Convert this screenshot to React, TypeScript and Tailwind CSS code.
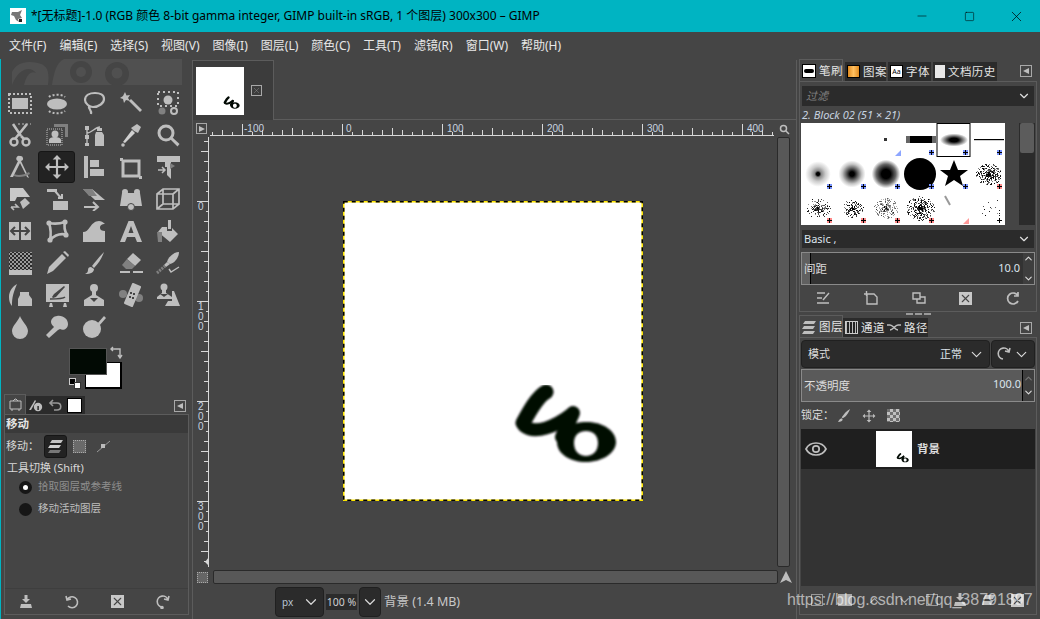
import { ReactNode } from "react";
import { ChevronDown, ChevronUp, Minus, Square, X } from "lucide-react";

const C = "#bebebe";

function Ico({ children, size = 24, box = 24 }: { children: ReactNode; size?: number; box?: number }) {
  return (
    <svg width={size} height={size} viewBox={`0 0 ${box} ${box}`} fill={C} stroke="none">
      {children}
    </svg>
  );
}

function Arrows4() {
  return <path d="M12 1l4 4h-3v6h6V8l4 4-4 4v-3h-6v6h3l-4 4-4-4h3v-6H5v3l-4-4 4-4v3h6V5H8z" />;
}

const tools: ReactNode[] = [
  // row 1
  <Ico><path d="M4 7h16v11H4z" /><path d="M1 3h22v19H1z" fill="none" stroke={C} strokeWidth="2" strokeDasharray="2 2" /></Ico>,
  <Ico><ellipse cx="12" cy="13" rx="10" ry="5.5" /><path d="M4 6c3-3 13-3 16 0M4 20c3 3 13 3 16 0" fill="none" stroke={C} strokeWidth="2" strokeDasharray="2 2" /></Ico>,
  <Ico><path d="M3 9c0-5 5-7 10-7s9 2 9 6-5 8-11 8c-3 0-8-3-8-7zM7 15c-1 3 3 4 2 8" fill="none" stroke={C} strokeWidth="2.2" /></Ico>,
  <Ico><path d="M10 10l2-2 11 11-2 2z" /><path d="M6 1l1.5 3.5L11 4 9 7l2 3-4-1-2 3-1-4-3-1 3-2z" /></Ico>,
  <Ico><circle cx="12" cy="9" r="4.5" /><circle cx="6" cy="20" r="3.5" fill="#808080" /><circle cx="18" cy="20" r="3" fill="none" stroke={C} strokeWidth="2" /><path d="M2 1h20v14H2z" fill="none" stroke={C} strokeWidth="2" strokeDasharray="2 3" /></Ico>,
  // row 2
  <Ico><path d="M5 1l8 12M19 1L7 16" fill="none" stroke={C} strokeWidth="2.6" /><circle cx="6" cy="19" r="3.5" fill="none" stroke={C} strokeWidth="2.4" /><circle cx="18" cy="19" r="3.5" fill="none" stroke={C} strokeWidth="2.4" /><path d="M13 13l3 3" stroke={C} strokeWidth="2.6" /><path d="M10 1h13" stroke={C} strokeDasharray="2 2" /></Ico>,
  <Ico><path d="M2 6h15v16H2z" fill="none" stroke={C} strokeWidth="1" strokeDasharray="1 1" /><circle cx="10" cy="11" r="3.5" /><path d="M4 20v-3c0-2 3-3 6-3s6 1 6 3v3z" /><path d="M9 1h14v13h-3V4H9z" fill="#808080" /></Ico>,
  <Ico><path d="M3 3h4v4H3zM3 12h4v4H3zM3 20h4v3H3z" /><path d="M5 7v13M5 10c5 0 8-6 13-6" fill="none" stroke={C} strokeWidth="1.4" /><path d="M14 9h6l2 3v11h-9V12z" /><path d="M15 5h5v3h-5z" /></Ico>,
  <Ico><path d="M15 8l-3-3 6-4 4 3-3 6z" /><path d="M13 7l3 3-10 10-2-1z" fill="#d0d0d0" /><circle cx="4" cy="22" r="1.8" /></Ico>,
  <Ico><circle cx="10" cy="10" r="7" fill="none" stroke={C} strokeWidth="3" /><path d="M14.5 16.5l2-2 7 6.5-2 2.5z" /></Ico>,
  // row 3
  <Ico><path d="M12 1a2.5 2.5 0 0 1 1 5l8 17-2-1L12 8 5 22H2l8-16a2.5 2.5 0 0 1 2-5z" /><path d="M6 19c4 2 10 1 15-2l1 2c-5 3-12 4-16 2z" fill="#808080" /></Ico>,
  <Ico size={26}><Arrows4 /></Ico>,
  <Ico><path d="M2 1h4v22H2zM8 5h9v7H8zM8 14h14v7H8z" /></Ico>,
  <Ico><path d="M4 6h16v15H4z" fill="none" stroke={C} strokeWidth="3" /><path d="M1 3h3v3H1zM20 21h3v3h-3z" /></Ico>,
  <Ico><path d="M1 1h23v6h-9v17l-4-4v-8l-2 0V7H1z" /><path d="M2 15h7M6 12l3 3-3 3" fill="none" stroke={C} strokeWidth="1.5" /><path d="M14 8l5 3-5 3z" fill="#808080" /></Ico>,
  // row 4
  <Ico><path d="M2 1h13l7 9H9l-2 4H2z" fill="#c8c8c8" /><path d="M12 15l5-4 5 5-7 6z" /><path d="M3 20h7l-3-3M3 20l3 3" fill="none" stroke={C} strokeWidth="1.6" /></Ico>,
  <Ico><path d="M2 2l10 0 0 3H2z" /><path d="M10 4l6 7M13 11h4V7" fill="none" stroke={C} strokeWidth="2" /><path d="M8 14h15v9H8z" /></Ico>,
  <Ico><path d="M1 2h9l13 11H13z" /><path d="M1 2h9l5 7H7z" fill="#808080" /><path d="M2 20h14M11 15l5 5-5 4" fill="none" stroke={C} strokeWidth="2" /></Ico>,
  <Ico><path d="M3 6h18l2 13H1z" /><circle cx="6" cy="5" r="3" /><circle cx="18" cy="5" r="3" /><circle cx="12" cy="20" r="3.5" stroke="#454545" /></Ico>,
  <Ico><path d="M1 7l6-5h16v15l-6 5H1zM1 7h16v15M17 7l6-5M7 2v15h16M7 17l-6 5" fill="none" stroke={C} strokeWidth="1.7" /></Ico>,
  // row 5
  <Ico><path d="M1 3h10v18H1zM13 3h10v18H13z" /><path d="M3 12h18M7 8l-4 4 4 4M17 8l4 4-4 4" fill="none" stroke="#454545" strokeWidth="2" /></Ico>,
  <Ico><path d="M4 4c5 1 10 1 16-1M20 3c-1 4-1 8 2 13M22 16c-6-2-12 0-17 5M5 21c1-5 1-11-1-17" fill="none" stroke={C} strokeWidth="2.6" /><circle cx="4" cy="4" r="2.6" /><circle cx="20" cy="3" r="2.6" /><circle cx="21" cy="16" r="2.6" /><circle cx="5" cy="21" r="2.6" /></Ico>,
  <Ico><path d="M1 23V13c3 0 5-2 7-5s5-6 9-6c2 0 4 1 6 3-3 0-5 1-5 4 0 2 2 3 5 3v11z" /></Ico>,
  <Ico><path d="M9.5 2h5L23 23h-5l-2-5H8l-2 5H1zM12 7l-2.5 7h5z" fillRule="evenodd" /></Ico>,
  <Ico><path d="M12 1h3v9h-3z" /><path d="M2 13l4-5h5v4h5V9l6 6-8 8z" /><path d="M1 13h5v10H2z" fill="#808080" /></Ico>,
  // row 6
  <Ico><path d="M1 19h23v5H1z" /><path d="M1 1h23v18H1z" fill="url(#checker)" /></Ico>,
  <Ico><path d="M17 3l4 4L8 20l-6 3 2-7z" /><path d="M18 1l2-1 4 4-1 2z" /></Ico>,
  <Ico><path d="M22 1c-2 6-6 12-10 16l-2-2C13 11 18 5 22 1z" /><path d="M9 16l3 2c0 3-3 5-9 5 2-1 3-2 3-4s1-3 3-3z" /></Ico>,
  <Ico><path d="M14 2l8 7-6 6-8-7z" /><path d="M8 8l8 7-3 3H7l-4-4z" fill="#808080" /><path d="M1 20h10v2H1zM14 20h10v2H14z" /></Ico>,
  <Ico><path d="M23 1c0 5-4 11-9 12l-3-2C12 6 18 1 23 1z" /><path d="M14 13l-3-2-3 3 2 2z" /><path d="M13 18l2 3 8-5" fill="none" stroke={C} strokeWidth="1.4" /><path d="M1 22l8-7" stroke="#808080" strokeWidth="3" strokeDasharray="2 1" /></Ico>,
  // row 7
  <Ico><path d="M9 1c-4 2-8 7-8 13 0 4 1 7 3 9 0-5 0-11 5-22z" /><path d="M12 9h9v3l3 4v7H10v-7l2-4z" /></Ico>,
  <Ico><path d="M1 1h24v18H1z" /><path d="M4 24l1-4h2l1 4zM18 24l1-4h2l1 4z" /><path d="M7 14l2-3 10-8 1 1-9 10-3 1z" fill="#454545" /><path d="M5 16c4 0 13 0 15-2" fill="none" stroke="#454545" strokeWidth="1.5" /></Ico>,
  <Ico><circle cx="12" cy="5" r="4" /><path d="M10 8h4v4l8 5v6H2v-6l8-5z" /><path d="M8 15h8l-4 4z" fill="#454545" /></Ico>,
  <Ico><circle cx="4" cy="11" r="4" fill="#808080" /><circle cx="20" cy="15" r="4" fill="#808080" /><path d="M14 1l7 3-8 19-7-3z" stroke={C} strokeLinejoin="round" strokeWidth="2" /><path d="M11 9h2v2h-2zM14 10h2v2h-2zM10 13h2v2h-2zM13 14h2v2h-2z" fill="#454545" /></Ico>,
  <Ico><circle cx="8" cy="4" r="3.5" /><path d="M6 7h4v3l6 4v2H1v-2l5-4z" /><path d="M16 8h2l6 15H9l3-5h4z" /><path d="M4 11h8l-4 3z" fill="#454545" /></Ico>,
  // row 8
  <Ico><path d="M12 1c1 4 8 10 8 15a8 8 0 0 1-16 0c0-5 7-11 8-15z" /></Ico>,
  <Ico><path d="M12 1c6-1 11 3 11 8s-5 7-8 5l-2 1-9 8-3-3 8-8c-1-1-3-3-3-5 0-3 3-6 6-6z" /></Ico>,
  <Ico><circle cx="10" cy="14" r="9" /><path d="M15 9l7-8 2 2-7 8z" /></Ico>,
];

function Wilber() {
  return (
    <svg width="170" height="26" viewBox="0 0 170 26" className="block">
      <path d="M0 26V13C4 4 14 1 26 4c8 2 12 6 10 22H12C15 14 20 12 24 14c-6-8-18-4-24 12zM52 0h128l-6 26H40c2-12 4-22 12-26z" fill="#505050" />
      <circle cx="69" cy="13" r="11" fill="#454545" />
      <circle cx="69" cy="13" r="5" fill="#505050" />
      <circle cx="105" cy="15" r="12" fill="#454545" />
      <circle cx="105" cy="14" r="5.5" fill="#505050" />
    </svg>
  );
}

function Combo({ children, className }: { children: ReactNode; className: string }) {
  return <div className={`flex items-center rounded-[4px] border border-[#202020] bg-[#2b2b2b] ${className}`}>{children}</div>;
}

function TabChip({ icon, label, active, w }: { icon: ReactNode; label?: string; active?: boolean; w: string }) {
  return (
    <div className={`flex items-center gap-[3px] pl-[2px] shrink-0 ${w} ${active ? "h-[22px] bg-[#454545] border border-b-0 border-[#5c5c5c]" : "h-[19px] bg-[#2b2b2b]"}`}>
      {icon}
      {label && <span className="text-[11.5px] leading-none text-[#e4e4e4] tracking-[0.4px] whitespace-nowrap">{label}</span>}
    </div>
  );
}

function ConfigBtn() {
  return (
    <div className="w-[12px] h-[12px] border border-[#a8a8a8] flex items-center justify-center">
      <div className="w-0 h-0 border-y-[3.5px] border-y-transparent border-r-[6px] border-r-[#bebebe]" />
    </div>
  );
}

function Rand(seed: number) {
  let s = seed;
  return () => {
    s = (s * 9301 + 49297) % 233280;
    return s / 233280;
  };
}

function Noise({ x, y, r, n, seed, o = 1 }: { x: number; y: number; r: number; n: number; seed: number; o?: number }) {
  const rnd = Rand(seed);
  const dots = [];
  for (let i = 0; i < n; i++) {
    const a = rnd() * 6.283;
    const d = rnd() * r;
    dots.push(<rect key={i} x={Math.round(x + Math.cos(a) * d)} y={Math.round(y + Math.sin(a) * d * 0.85)} width="1" height="1" fill="#000" opacity={o * (0.4 + rnd() * 0.6)} />);
  }
  return <>{dots}</>;
}

function Mark({ c, r, color, tri }: { c: number; r: number; color: string; tri?: boolean }) {
  const x = c * 34;
  const y = r * 34;
  if (tri) return <path d={`M${x + 26} ${y + 33}l6 -6v6z`} fill={color} />;
  return (
    <g>
      <path d={`M${x + 26} ${y + 27}h5v5h-5z`} fill={color} />
      <path d={`M${x + 28} ${y + 27}h1v5h-1zM${x + 26} ${y + 29}h5v1h-5z`} fill="#000" />
    </g>
  );
}

function Brushes() {
  return (
    <svg width="204" height="102" viewBox="0 0 204 102" className="block bg-white shrink-0">
      <defs>
        <radialGradient id="b1"><stop offset="0.1" stopColor="#000" /><stop offset="0.22" stopColor="#888" /><stop offset="0.5" stopColor="#ccc" /><stop offset="0.85" stopColor="#fff" /></radialGradient>
        <radialGradient id="b2"><stop offset="0.15" stopColor="#000" /><stop offset="0.4" stopColor="#666" /><stop offset="0.65" stopColor="#c4c4c4" /><stop offset="0.9" stopColor="#fff" /></radialGradient>
        <radialGradient id="b3"><stop offset="0.3" stopColor="#000" /><stop offset="0.65" stopColor="#666" /><stop offset="0.95" stopColor="#fff" /></radialGradient>
        <radialGradient id="b4"><stop offset="0.3" stopColor="#000" /><stop offset="1" stopColor="#fff" /></radialGradient>
      </defs>
      <rect x="83" y="15" width="3" height="3" fill="#333" />
      <rect x="105" y="13" width="30" height="7" fill="#000" />
      <rect x="105" y="13" width="4" height="7" fill="#666" />
      <rect x="131" y="13" width="4" height="7" fill="#666" />
      <ellipse cx="153" cy="17" rx="14" ry="6.5" fill="url(#b4)" />
      <rect x="136" y="0.5" width="33" height="33" fill="none" stroke="#000" />
      <rect x="173" y="16" width="30" height="1.2" fill="#000" />
      <circle cx="17" cy="51" r="15" fill="url(#b1)" />
      <circle cx="51" cy="51" r="15" fill="url(#b2)" />
      <circle cx="85" cy="51" r="15" fill="url(#b3)" />
      <circle cx="119" cy="51" r="16" fill="#000" />
      <path d="M153 37l4 10h10l-8 6 3 10-9-6-9 6 3-10-8-6h10z" fill="#000" />
      <Noise x={187} y={51} r={13} n={320} seed={3} />
      <Noise x={17} y={85} r={12} n={150} seed={7} />
      <Noise x={51} y={85} r={11} n={150} seed={11} />
      <Noise x={85} y={85} r={12} n={220} seed={13} o={0.6} />
      <Noise x={119} y={85} r={14} n={340} seed={17} />
      <path d="M144 73l5 9" stroke="#999" strokeWidth="2" />
      <Noise x={190} y={85} r={13} n={14} seed={23} />
      {[[2, 0, "#8da6ff", true], [3, 0, "#7a95ff"], [4, 0, "#7a95ff"], [5, 0, "#7a95ff"], [0, 1, "#7a95ff"], [1, 1, "#7a95ff"], [2, 1, "#7a95ff"], [3, 1, "#7a95ff"], [4, 1, "#7a95ff"], [5, 1, "#ff8a8a"], [0, 2, "#ff8a8a"], [1, 2, "#ff8a8a"], [2, 2, "#ff8a8a"], [3, 2, "#ff8a8a"], [4, 2, "#ff9a9a", true], [5, 2, "#fff"]].map(([c, r, color, tri], i) => (
        <Mark key={i} c={c as number} r={r as number} color={color as string} tri={tri as boolean | undefined} />
      ))}
    </svg>
  );
}

// the painted stroke, in image coordinates (300 x 300)
function Stroke40({ blur }: { blur?: boolean }) {
  return (
    <g filter={blur ? "url(#soft)" : undefined}>
      <g fill="none" stroke="#020a04" strokeLinecap="round" strokeLinejoin="round">
        <path d="M203 191C194 196 186 211 180 222" strokeWidth="15" />
        <path d="M181 225C192 234 212 226 230 212" strokeWidth="13" />
        <path d="M230 212L219 236" strokeWidth="14" />
      </g>
      <path
        d="M214 241c0-12 14-20 30-20s29 9 29 20-14 20-30 20-29-8-29-20zM231 242c0 8 5 13 12 13s12-5 12-13-5-12-12-12-12 4-12 12z"
        fill="#020a04"
        fillRule="evenodd"
      />
    </g>
  );
}

function HRuler() {
  const ticks = [];
  for (let i = 0; i < 57; i++) {
    const x = 3 + i * 10;
    const major = (x - 33) % 100 === 0;
    const mid = (x - 33) % 50 === 0 && !major;
    const h = major ? 11 : mid ? 7 : (x - 33) % 20 === 0 ? 5 : 3;
    ticks.push(<rect key={i} x={x} y={14 - h} width="1" height={h} fill="#d8d8d8" />);
  }
  return (
    <svg width="565" height="15" className="block">
      {ticks}
      <rect x="1" y="14" width="564" height="1" fill="#d8d8d8" />
      {[[-100, 35], [0, 137], [100, 238], [200, 338], [300, 438], [400, 538]].map(([n, x]) => (
        <text key={n} x={x} y="11" fontSize="10" fill="#c8d4e0" fontFamily="Liberation Sans">{n}</text>
      ))}
    </svg>
  );
}

function VRuler() {
  const ticks = [];
  for (let i = 0; i < 43; i++) {
    const y = 4 + i * 10;
    const major = (y - 64) % 100 === 0;
    const h = major ? 12 : (y - 64) % 50 === 0 ? 8 : (y - 64) % 20 === 0 ? 5 : 3;
    ticks.push(<rect key={i} x={13 - h} y={y} width={h} height="1" fill="#d8d8d8" />);
  }
  return (
    <svg width="14" height="430" className="block">
      {ticks}
      <rect x="12" y="0" width="1" height="430" fill="#d8d8d8" />
      {[[73, "0"], [173, "1"], [183, "0"], [193, "0"], [273, "2"], [283, "0"], [293, "0"], [373, "3"], [383, "0"], [393, "0"]].map(([y, t], i) => (
        <text key={i} x="2" y={y as number} fontSize="10" fill="#c8d4e0" fontFamily="Liberation Sans">{t}</text>
      ))}
      <path d="M9 425l4-5v9z" fill="#d8d8d8" />
    </svg>
  );
}

function TitleBar() {
  return (
    <div className="h-[32px] shrink-0 bg-[#00b4c2] flex items-center pl-[10px] text-black">
      <div className="w-[16px] h-[16px] bg-white flex items-center justify-center">
        <svg width="14" height="14" viewBox="0 0 14 14">
          <path d="M1 3h6l4-2-2 5 2 3-4 1 1 3-3-2-2-4-3-1z" fill="#777" />
          <path d="M8 10h3v3H8z" fill="#222" />
        </svg>
      </div>
      <span className="ml-[5px] text-[12px] leading-none">*[无标题]-1.0 (RGB 颜色 8-bit gamma integer, GIMP built-in sRGB, 1 个图层) 300x300 – GIMP</span>
      <div className="ml-auto flex items-center">
        <div className="w-[48px] flex justify-center"><Minus size={14} strokeWidth={1} /></div>
        <div className="w-[46px] flex justify-center"><Square size={11} strokeWidth={1.2} /></div>
        <div className="w-[48px] flex justify-center"><X size={17} strokeWidth={1} /></div>
      </div>
    </div>
  );
}

function MenuBar() {
  const items = ["文件(F)", "编辑(E)", "选择(S)", "视图(V)", "图像(I)", "图层(L)", "颜色(C)", "工具(T)", "滤镜(R)", "窗口(W)", "帮助(H)"];
  return (
    <div className="h-[27px] shrink-0 flex items-center pl-[9px] gap-[13px] text-[12px] text-[#e8e8e8]">
      {items.map((m) => (
        <span key={m}>{m}</span>
      ))}
    </div>
  );
}

function Toolbox() {
  return (
    <div className="w-[190px] shrink-0 flex flex-col border-l border-[#00b4c2]">
      <div className="h-[28px] pl-[11px] shrink-0"><Wilber /></div>
      <svg width="0" height="0" className="absolute">
        <defs>
          <pattern id="checker" width="4" height="4" patternUnits="userSpaceOnUse">
            <rect width="4" height="4" fill="#9a9a9a" />
            <rect width="2" height="2" fill="#2a2a2a" />
            <rect x="2" y="2" width="2" height="2" fill="#2a2a2a" />
          </pattern>
        </defs>
      </svg>
      <div className="grid grid-cols-[repeat(5,37px)] auto-rows-[32px]">
        {tools.map((t, i) => (
          <div key={i} className={`flex items-center justify-center rounded-[3px] ${i === 11 ? "bg-[#222222] border border-[#161616]" : ""}`}>
            {t}
          </div>
        ))}
      </div>
      {/* fg / bg swatches */}
      <div className="relative h-[49px] shrink-0 mt-[-3px]">
        <div className="absolute left-[84px] top-[22px] w-[37px] h-[27px] bg-white border border-black border-b-2 border-r-2" />
        <div className="absolute left-[68px] top-[8px] w-[38px] h-[27px] bg-[#020a04] border border-[#555]" />
        <svg width="14" height="14" viewBox="0 0 14 14" className="absolute left-[109px] top-[6px]" fill="none" stroke={C} strokeWidth="1.4">
          <path d="M1 3h9v8M3 1L1 3l2 2M8 9l2 3 2-3" />
        </svg>
        <div className="absolute left-[68px] top-[38px] w-[7px] h-[7px] bg-black border border-[#ccc]" />
        <div className="absolute left-[73px] top-[42px] w-[7px] h-[7px] bg-white border border-[#333]" />
      </div>
      <div className="flex-1 flex flex-col pl-[3px] pr-[1px] mt-[6px] min-h-0">
        <div className="h-[19px] flex items-end shrink-0 relative">
          <div className="w-[22px] h-[20px] bg-[#454545] border border-b-0 border-[#5c5c5c] flex items-center justify-center">
            <svg width="15" height="14" viewBox="0 0 15 14" fill="none" stroke={C}><path d="M2 3h11v8H2zM4 11v2M11 11v2M5 3l2-2h1l2 2" /></svg>
          </div>
          <div className="w-[19px] h-[18px] bg-[#2b2b2b] flex items-center justify-center">
            <svg width="15" height="14" viewBox="0 0 15 14"><path d="M1 12L7 2l1 1-5 9z" fill={C} /><circle cx="10" cy="9" r="4.2" fill={C} /><rect x="9.4" y="8" width="1.4" height="4" fill="#222" /></svg>
          </div>
          <div className="w-[19px] h-[18px] bg-[#2b2b2b] flex items-center justify-center">
            <svg width="14" height="13" viewBox="0 0 14 13" fill="none" stroke="#999" strokeWidth="1.6"><path d="M5 1L2 4l3 3M2 4h7c5 0 5 7 0 7H6" /></svg>
          </div>
          <div className="w-[21px] h-[18px] bg-[#2b2b2b] flex items-center justify-center">
            <div className="w-[15px] h-[15px] bg-white border border-black" />
          </div>
          <div className="ml-auto mr-[3px] mb-[2px]"><ConfigBtn /></div>
        </div>
        <div className="flex-1 min-h-0 flex flex-col border border-[#5c5c5c]">
          <div className="h-[18px] bg-[#3a3a3a] pl-[1px] flex items-center text-[11.5px] font-bold text-[#e4e4e4] shrink-0">移动</div>
          <div className="flex items-center pl-[1px] h-[24px] mt-[1px] text-[11px] text-[#d8d8d8] shrink-0">
            <span>移动：</span>
            <div className="w-[23px] h-[23px] ml-[5px] rounded-[3px] bg-[#222222] border border-[#161616] flex items-center justify-center">
              <svg width="15" height="13" viewBox="0 0 15 13"><path d="M4 0h11l-2 3H2z" fill="#c4c4c4" /><path d="M2 5h11l-2 3H0z" fill="#d0d0d0" /><path d="M2 10h11l-2 3H0z" fill="#777" /></svg>
            </div>
            <div className="w-[13px] h-[13px] ml-[6px] bg-[#6a6a6a] border border-dotted border-[#aaa]" />
            <svg width="15" height="15" viewBox="0 0 15 15" className="ml-[10px]"><path d="M1 13L14 2" stroke="#999" /><rect x="5" y="5" width="4" height="4" fill="#bbb" /></svg>
          </div>
          <div className="text-[11px] text-[#d8d8d8] pl-[2px] mt-[2px] leading-[16px] whitespace-pre">工具切换 (Shift)</div>
          <div className="flex items-center gap-[6px] pl-[14px] mt-[2px] h-[18px]">
            <div className="w-[13px] h-[13px] rounded-full bg-[#161616] flex items-center justify-center"><div className="w-[5px] h-[5px] rounded-full bg-white" /></div>
            <span className="text-[10.5px] text-[#8e8e8e]">拾取图层或参考线</span>
          </div>
          <div className="flex items-center gap-[6px] pl-[14px] mt-[4px] h-[18px]">
            <div className="w-[13px] h-[13px] rounded-full bg-[#161616]" />
            <span className="text-[10.5px] text-[#bebebe]">移动活动图层</span>
          </div>
          <div className="mt-auto h-[26px] flex items-center justify-between pl-[14px] pr-[18px] bg-[#454545] border-t border-[#3e3e3e]">
            <svg width="14" height="14" viewBox="0 0 14 14" fill={C}><path d="M5.5 0h3v4H11L7 8 3 4h2.5zM2 9h10l1 4H1z" /></svg>
            <svg width="14" height="14" viewBox="0 0 14 14" fill="none" stroke={C} strokeWidth="1.6"><path d="M1 1l1 4 4-1M2 5a5.5 5.5 0 1 1 1 6" /></svg>
            <div className="w-[13px] h-[13px] bg-[#c8c8c8] flex items-center justify-center"><X size={13} color="#454545" strokeWidth={2} /></div>
            <svg width="14" height="14" viewBox="0 0 14 14" fill="none" stroke={C} strokeWidth="1.6"><path d="M13 1l-1 4-4-1M12 5a5.5 5.5 0 1 0-6 7" /><circle cx="6" cy="12.5" r="1" fill={C} /></svg>
          </div>
        </div>
      </div>
      <div className="h-[4px] shrink-0" />
    </div>
  );
}

function Canvas() {
  return (
    <div className="flex-1 min-w-0 flex flex-col border-l border-r border-[#5c5c5c] mt-[1px]">
      <div className="h-[60px] shrink-0 flex border-b border-[#5c5c5c]">
        <div className="w-[81px] h-[60px] bg-[#3c3c3c] border-r border-t border-[#5c5c5c] flex items-center pl-[3px] gap-[7px]">
          <svg width="48" height="48" viewBox="0 0 300 300" className="bg-white shrink-0">
            <Stroke40 />
          </svg>
          <div className="w-[11px] h-[11px] border border-[#a8a8a8] flex items-center justify-center"><X size={9} color="#a8a8a8" strokeWidth={1} /></div>
        </div>
      </div>
      <div className="h-[15px] shrink-0 flex items-end pl-[3px] mt-[1px]">
        <div className="w-[11px] h-[11px] border border-[#a8a8a8] mb-[2px] flex items-center justify-center">
          <div className="w-0 h-0 border-y-[3.5px] border-y-transparent border-l-[6px] border-l-[#bebebe]" />
        </div>
        <div className="ml-[2px]"><HRuler /></div>
        <div className="w-[12px] h-[12px] ml-[4px] mb-[1px] flex items-center justify-center">
          <svg width="11" height="11" viewBox="0 0 11 11" fill="none" stroke={C} strokeWidth="1.5"><circle cx="4.5" cy="4.5" r="3" /><path d="M7 7l3 3" /></svg>
        </div>
      </div>
      <div className="flex-1 min-h-0 flex pl-[3px]">
        <div className="pt-[1px]"><VRuler /></div>
        <div className="flex-1 min-w-0 flex items-center justify-center pb-[2px] pr-[1px]">
          <svg width="300" height="300" viewBox="0 0 300 300" className="block">
            <defs>
              <filter id="soft"><feGaussianBlur stdDeviation="1.3" /></filter>
            </defs>
            <rect width="300" height="300" fill="#fff" />
            <Stroke40 blur />
            <rect x="0.75" y="0.75" width="298.5" height="298.5" fill="none" stroke="#ffe600" strokeWidth="1.5" />
            <rect x="0.75" y="0.75" width="298.5" height="298.5" fill="none" stroke="#000" strokeWidth="1.5" strokeDasharray="4 4" />
          </svg>
        </div>
        <div className="w-[19px] shrink-0 pt-[1px] pr-[6px]">
          <div className="w-[13px] h-[430px] bg-[#585858] border border-[#2a2a2a] rounded-[2px]" />
        </div>
      </div>
      <div className="h-[16px] shrink-0 flex items-center pl-[4px] pr-[3px] mt-[1px]">
        <div className="w-[11px] h-[11px] bg-[#666] border border-dotted border-[#aaa]" />
        <div className="ml-[5px] flex-1 h-[14px] bg-[#585858] border border-[#2a2a2a] rounded-[2px]" />
        <svg width="14" height="14" viewBox="0 0 14 14" className="ml-[1px]"><path d="M7 1l6 12-6-3-6 3z" fill={C} /></svg>
      </div>
      <div className="h-[34px] shrink-0 flex items-center pl-[82px] text-[#d0d0d0]">
        <Combo className="w-[49px] h-[30px] pl-[6px] justify-between pr-[3px]">
          <span className="text-[10px] text-[#b8c4d4]">px</span>
          <ChevronDown size={18} color="#d8d8d8" strokeWidth={1.6} />
        </Combo>
        <div className="w-[35px] h-[30px] flex items-center justify-center">
          <span className="text-[10.5px] bg-[#2b2b2b] px-[1px] leading-[16px] whitespace-nowrap">100 %</span>
        </div>
        <Combo className="w-[22px] h-[30px] justify-center">
          <ChevronDown size={18} color="#d8d8d8" strokeWidth={1.6} />
        </Combo>
        <span className="text-[12.5px] ml-[3px] text-[#c8c8c8]">背景 (1.4 MB)</span>
      </div>
    </div>
  );
}

function Dock() {
  return (
    <div className="w-[243px] shrink-0 flex flex-col pl-[2px] text-[#dcdcdc]">
      {/* brushes */}
      <div className="h-[22px] flex items-end gap-[2px] pr-[7px] shrink-0">
        <TabChip
          active
          w="w-[44px]"
          label="笔刷"
          icon={<div className="w-[14px] h-[14px] shrink-0 bg-white border border-black flex items-center justify-center"><div className="w-[10px] h-[4px] rounded-full bg-black" /></div>}
        />
        <TabChip w="w-[41px]" label="图案" icon={<div className="w-[13px] h-[13px] border border-black bg-[linear-gradient(90deg,#e08a20,#ffc060,#e08a20)] shrink-0" />} />
        <TabChip w="w-[43px]" label="字体" icon={<div className="w-[13px] h-[13px] bg-white border border-black text-[7px] leading-[11px] text-black text-center shrink-0">Aa</div>} />
        <TabChip w="w-[64px]" label="文档历史" icon={<div className="w-[10px] h-[13px] bg-[#e8e8e8] shrink-0" />} />
        <div className="ml-auto mr-[1px] mb-[4px]"><ConfigBtn /></div>
      </div>
      <div className="border border-[#5c5c5c] flex flex-col mr-[3px] px-[1px] h-[231px] shrink-0">
        <div className="mx-[1px] mt-[4px] h-[20px] shrink-0 bg-[#2b2b2b] flex items-center justify-between pl-[4px] pr-[3px]">
          <span className="italic text-[11px] text-[#808080]">过滤</span>
          <ChevronDown size={14} strokeWidth={2} color="#e0e0e0" />
        </div>
        <div className="h-[17px] shrink-0 italic text-[11px] leading-[18px] text-[#c8d4e0] pl-[1px]">2. Block 02 (51 × 21)</div>
        <div className="flex h-[102px] shrink-0">
          <Brushes />
          <div className="w-[14px] bg-[#454545]" />
          <div className="w-[16px] bg-[#2b2b2b] pl-[1px] pr-[1px]">
            <div className="h-[30px] bg-[#5c5c5c] rounded-[2px]" />
          </div>
        </div>
        <div className="mx-[1px] mt-[5px] h-[18px] shrink-0 bg-[#2b2b2b] flex items-center justify-between pl-[2px] pr-[3px]">
          <span className="text-[11px] text-[#dce4ec]">Basic ,</span>
          <ChevronDown size={14} strokeWidth={2} color="#e0e0e0" />
        </div>
        <div className="mt-[4px] h-[33px] shrink-0 relative flex items-center justify-between bg-[#333333] border border-[#8a8a8a]">
          <div className="absolute left-0 top-0 bottom-0 w-[9px] bg-[#606060] border-r border-black" />
          <span className="relative pl-[2px] text-[11.5px]">间距</span>
          <div className="flex items-center">
            <span className="text-[11px] text-[#dce4ec] mr-[3px]">10.0</span>
            <div className="w-[11px] h-[31px] flex flex-col items-center justify-between bg-[#3e3e3e]">
              <ChevronUp size={11} strokeWidth={2.4} />
              <ChevronDown size={11} strokeWidth={2.4} />
            </div>
          </div>
        </div>
        <div className="flex-1 flex items-center justify-between px-[15px]">
          <svg width="14" height="14" viewBox="0 0 14 14" fill="none" stroke={C} strokeWidth="1.4"><path d="M1 2h8M1 7h5M1 12h12M7 9l6-7" /></svg>
          <svg width="14" height="14" viewBox="0 0 14 14" fill="none" stroke={C} strokeWidth="1.4"><path d="M3 3h7l3 3v7H3zM0 3h5M2.5 0v5" /></svg>
          <svg width="14" height="14" viewBox="0 0 14 14" fill="none" stroke={C} strokeWidth="1.4"><path d="M1 2h7v6H1zM5 8v4h8V6H8" /></svg>
          <div className="w-[13px] h-[13px] bg-[#c8c8c8] flex items-center justify-center"><X size={13} color="#454545" strokeWidth={2} /></div>
          <svg width="14" height="14" viewBox="0 0 14 14" fill="none" stroke={C} strokeWidth="1.7"><path d="M12 1v4H8M12 5a5.5 5.5 0 1 0 0 5" /></svg>
        </div>
      </div>
      <div className="h-[4px] flex justify-center gap-[2px] items-center shrink-0 pr-[3px]">
        <div className="w-[7px] h-[2px] bg-[#9a9a9a]" />
        <div className="w-[7px] h-[2px] bg-[#9a9a9a]" />
        <div className="w-[7px] h-[2px] bg-[#9a9a9a]" />
      </div>
      {/* layers */}
      <div className="h-[21px] flex items-end shrink-0 pr-[7px]">
        <TabChip
          active
          w="w-[44px]"
          label="图层"
          icon={<svg width="14" height="14" viewBox="0 0 14 14" fill={C} className="shrink-0"><path d="M3 1h11l-2 3H1zM2 6h11l-2 3H0zM2 11h11l-2 3H0z" /></svg>}
        />
        <TabChip w="w-[42px]" label="通道" icon={<div className="w-[13px] h-[13px] border border-[#ccc] bg-[repeating-linear-gradient(90deg,#bbb_0,#bbb_1px,#222_1px,#222_3px)] shrink-0" />} />
        <TabChip
          w="w-[43px]"
          label="路径"
          icon={<svg width="14" height="12" viewBox="0 0 14 12" fill="none" stroke={C} strokeWidth="1.5" className="shrink-0"><path d="M0 3h3c3 0 5 5 8 5M14 3h-3C8 3 6 8 3 8" /></svg>}
        />
        <div className="ml-auto mr-[1px] mb-[3px]"><ConfigBtn /></div>
      </div>
      <div className="flex-1 min-h-0 border border-[#5c5c5c] mr-[3px] px-[1px] flex flex-col">
        <div className="flex h-[28px] mt-[2px] shrink-0 gap-[1px]">
          <Combo className="flex-1 pl-[6px] pr-[4px] justify-between text-[11px]">
            <span>模式</span>
            <div className="flex items-center gap-[6px]">
              <span className="text-[#dce4ec]">正常</span>
              <ChevronDown size={17} strokeWidth={1.6} />
            </div>
          </Combo>
          <Combo className="w-[44px] justify-center gap-[2px]">
            <svg width="14" height="14" viewBox="0 0 14 14" fill="none" stroke={C} strokeWidth="1.6"><path d="M13 1l-1 4-4-1M12 5a5.5 5.5 0 1 0-6 7" /></svg>
            <ChevronDown size={17} strokeWidth={1.6} />
          </Combo>
        </div>
        <div className="h-[33px] shrink-0 mt-[1px] flex items-stretch border border-[#8a8a8a]">
          <div className="flex-1 bg-[#5a5a5a] flex items-center justify-between pl-[2px] pr-[1px] border-r border-black">
            <span className="text-[11.5px]">不透明度</span>
            <span className="text-[11px] text-[#dce4ec] pb-[2px]">100.0</span>
          </div>
          <div className="w-[11px] flex flex-col items-center justify-between py-[3px] bg-[#3e3e3e]">
            <ChevronUp size={11} strokeWidth={2.4} color="#777" />
            <ChevronDown size={11} strokeWidth={2.4} />
          </div>
        </div>
        <div className="flex items-center h-[27px] shrink-0 text-[11px]">
          <span>锁定：</span>
          <svg width="13" height="13" viewBox="0 0 14 14" fill={C} className="ml-[4px]"><path d="M13 0c-2 5-5 9-8 10l-1-1c2-3 5-7 9-9zM4 10l1 1c0 2-2 3-5 3 1-1 1-3 4-4z" /></svg>
          <svg width="14" height="14" viewBox="0 0 24 24" fill={C} className="ml-[11px]"><Arrows4 /></svg>
          <div className="ml-[11px] w-[13px] h-[13px] bg-[conic-gradient(#c0c0c0_25%,#707070_25%_50%,#c0c0c0_50%_75%,#707070_75%)] bg-[length:6px_6px]" />
        </div>
        <div className="flex-1 min-h-0 bg-[#333333] flex flex-col">
          <div className="h-[40px] shrink-0 bg-[#1f1f1f] flex items-center">
            <svg width="22" height="16" viewBox="0 0 22 16" className="ml-[4px]" fill="none" stroke={C} strokeWidth="1.7"><path d="M1 8c4-8 16-8 20 0-4 8-16 8-20 0z" /><circle cx="11" cy="8" r="3.2" /></svg>
            <svg width="36" height="36" viewBox="0 0 300 300" className="ml-[49px] bg-white shrink-0"><Stroke40 /></svg>
            <span className="ml-[5px] text-[11.5px] font-bold">背景</span>
          </div>
        </div>
        <div className="h-[28px] shrink-0 flex items-center justify-between pl-[10px] pr-[11px]">
          <div className="w-[12px] h-[12px] border border-[#999]" />
          <div className="w-[14px] h-[12px] bg-[#aaa]" />
          <ChevronUp size={15} color="#aaa" />
          <ChevronDown size={15} color="#aaa" />
          <div className="w-[12px] h-[12px] border border-[#999]" />
          <svg width="14" height="14" viewBox="0 0 14 14" fill={C}><path d="M5.5 0h3v4H11L7 8 3 4h2.5zM2 9h10l1 4H1z" /></svg>
          <svg width="14" height="14" viewBox="0 0 14 14" fill={C}><path d="M3 2h10l-2 4H1zM1 8h10l-2 4H0z" /></svg>
          <div className="w-[13px] h-[13px] bg-[#c8c8c8] flex items-center justify-center"><X size={13} color="#454545" strokeWidth={2} /></div>
        </div>
      </div>
      <div className="h-[4px] shrink-0" />
    </div>
  );
}

export default function App() {
  return (
    <div className="relative w-[1040px] h-[619px] overflow-hidden bg-[#454545] flex flex-col font-['Noto_Sans','Noto_Sans_CJK_SC',sans-serif]">
      <TitleBar />
      <MenuBar />
      <div className="flex-1 min-h-0 flex">
        <Toolbox />
        <div className="w-[2px] shrink-0" />
        <Canvas />
        <Dock />
      </div>
      <div className="absolute left-[787px] top-[588px] font-['Liberation_Sans',sans-serif] text-[16px] leading-[24px] text-white/60 whitespace-nowrap">https://blog.csdn.net/qq_38791897</div>
    </div>
  );
}
